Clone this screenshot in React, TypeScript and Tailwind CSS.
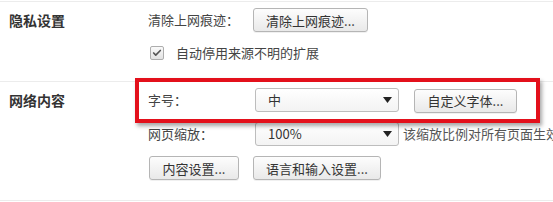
import { Check } from 'lucide-react';

const font = { fontFamily: '"Microsoft YaHei", "Noto Sans CJK SC", "Noto Sans", sans-serif' };

function Btn({ label, width }: { label: string; width: string }) {
    return (
        <button
            className={`${width} h-[24px] shrink-0 rounded-[3px] border border-[#b5b5b5] bg-gradient-to-b from-[#fdfdfd] to-[#e9e9e9] text-[13px] leading-none text-[#333] shadow-[0_1px_0_rgba(0,0,0,0.06)]`}
        >
            {label}
        </button>
    );
}

function Select({ value }: { value: string }) {
    return (
        <div className="w-[144px] h-[24px] shrink-0 flex items-center justify-between rounded-[3px] border border-[#bdbdbd] bg-gradient-to-b from-white to-[#f3f3f3] pl-3 pr-[6px] text-[13px] text-[#333]">
            <span>{value}</span>
            <svg width="9" height="6" viewBox="0 0 9 6">
                <path d="M0 0 H9 L4.5 6 Z" fill="#222" />
            </svg>
        </div>
    );
}

export default function App() {
    return (
        <div className="relative w-[553px] h-[202px] overflow-hidden bg-white pt-px" style={font}>
            {/* 隐私设置 */}
            <section className="flex h-[80px] border-t border-[#ececec] pt-[6px]">
                <h3 className="w-[148px] shrink-0 pl-[9px] pt-[3px] text-[14px] font-bold leading-[18px] text-[#333]">隐私设置</h3>
                <div className="flex flex-col">
                    <div className="flex items-center h-[24px]">
                        <span className="w-[105px] text-[13px] text-[#444]">清除上网痕迹：</span>
                        <Btn label="清除上网痕迹..." width="w-[115px]" />
                    </div>
                    <div className="mt-[13px] flex items-center gap-[12px] pl-[2px]">
                        <span className="flex h-[14px] w-[14px] items-center justify-center rounded-[2px] border border-[#adadad] bg-gradient-to-b from-[#fafafa] to-[#e2e2e2]">
                            <Check className="h-[10px] w-[10px] text-[#555]" strokeWidth={4} />
                        </span>
                        <span className="text-[13px] leading-[16px] text-[#444]">自动停用来源不明的扩展</span>
                    </div>
                </div>
            </section>

            {/* 网络内容 */}
            <section className="flex h-[120px] border-y border-[#ececec] pt-[6px]">
                <h3 className="w-[148px] shrink-0 pl-[9px] pt-[3px] text-[14px] font-bold leading-[18px] text-[#333]">网络内容</h3>
                <div className="flex flex-col gap-[10px]">
                    <div className="flex items-center h-[24px]">
                        <span className="w-[107px] text-[13px] text-[#444]">字号：</span>
                        <Select value="中" />
                        <div className="ml-[15px]">
                            <Btn label="自定义字体..." width="w-[103px]" />
                        </div>
                    </div>
                    <div className="flex items-center h-[24px]">
                        <span className="w-[107px] text-[13px] text-[#444]">网页缩放：</span>
                        <Select value="100%" />
                        <span className="ml-[4px] whitespace-nowrap text-[13px] text-[#555]">该缩放比例对所有页面生效</span>
                    </div>
                    <div className="flex items-center gap-[14px] pl-px">
                        <Btn label="内容设置..." width="w-[90px]" />
                        <Btn label="语言和输入设置..." width="w-[128px]" />
                    </div>
                </div>
            </section>

            {/* highlight */}
            <div className="absolute left-[135px] top-[78px] h-[45px] w-[405px] border-[4px] border-[#e3101b] shadow-[2px_3px_4px_rgba(0,0,0,0.35)]" />
        </div>
    );
}
